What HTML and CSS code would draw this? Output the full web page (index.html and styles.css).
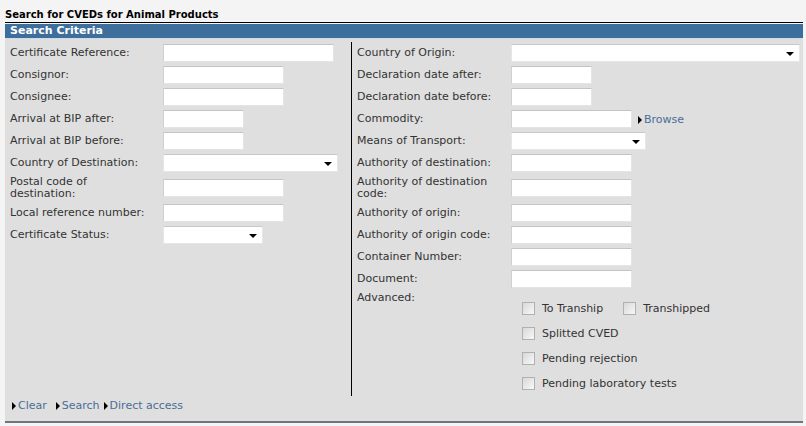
FILE: index.html
```html
<!DOCTYPE html>
<html lang="en">
<head>
    <meta charset="UTF-8">
    <title>Search for CVEDs for Animal Products</title>
    <link rel="stylesheet" href="styles.css">
</head>
<body>
    <div class="page">
        <h1 class="pageTitle">Search for CVEDs for Animal Products</h1>
        <div class="panel">
            <div class="panelHead">Search Criteria</div>
            <div class="panelBody">
                <div class="columns">
                    <div class="col colLeft">
                        <div class="field"><label>Certificate Reference:</label><input class="text w171" type="text"></div>
                        <div class="field"><label>Consignor:</label><input class="text w121" type="text"></div>
                        <div class="field"><label>Consignee:</label><input class="text w121" type="text"></div>
                        <div class="field"><label>Arrival at BIP after:</label><input class="text w81" type="text"></div>
                        <div class="field"><label>Arrival at BIP before:</label><input class="text w81" type="text"></div>
                        <div class="field"><label>Country of Destination:</label><div class="select w175"></div></div>
                        <div class="field tall"><label>Postal code of destination:</label><input class="text w121" type="text"></div>
                        <div class="field"><label>Local reference number:</label><input class="text w121" type="text"></div>
                        <div class="field"><label>Certificate Status:</label><div class="select w100"></div></div>
                    </div>
                    <div class="col colRight">
                        <div class="field"><label>Country of Origin:</label><div class="select w289"></div></div>
                        <div class="field"><label>Declaration date after:</label><input class="text w81" type="text"></div>
                        <div class="field"><label>Declaration date before:</label><input class="text w81" type="text"></div>
                        <div class="field"><label>Commodity:</label><input class="text w121" type="text"><a class="link browse" href="#">Browse</a></div>
                        <div class="field"><label>Means of Transport:</label><div class="select w135"></div></div>
                        <div class="field"><label>Authority of destination:</label><input class="text w121" type="text"></div>
                        <div class="field tall"><label>Authority of destination code:</label><input class="text w121" type="text"></div>
                        <div class="field"><label>Authority of origin:</label><input class="text w121" type="text"></div>
                        <div class="field"><label>Authority of origin code:</label><input class="text w121" type="text"></div>
                        <div class="field"><label>Container Number:</label><input class="text w121" type="text"></div>
                        <div class="field"><label>Document:</label><input class="text w121" type="text"></div>
                        <div class="field advanced">
                            <label>Advanced:</label>
                            <div class="checks">
                                <div class="checkRow">
                                    <span class="check"></span><span class="checkText">To Tranship</span>
                                    <span class="check second"></span><span class="checkText">Transhipped</span>
                                </div>
                                <div class="checkRow"><span class="check"></span><span class="checkText">Splitted CVED</span></div>
                                <div class="checkRow"><span class="check"></span><span class="checkText">Pending rejection</span></div>
                                <div class="checkRow"><span class="check"></span><span class="checkText">Pending laboratory tests</span></div>
                            </div>
                        </div>
                    </div>
                </div>
                <div class="actions">
                    <a class="link clear" href="#">Clear</a>
                    <a class="link" href="#">Search</a>
                    <a class="link" href="#">Direct access</a>
                </div>
            </div>
        </div>
    </div>
</body>
</html>
```

FILE: styles.css
```css
body {
    margin: 0;
    padding: 0;
    background-color: #f4f4f4;
    font-family: 'DejaVu Sans', Verdana, sans-serif;
    font-size: 11px;
    color: #333333;
}

.page {
    padding: 0 3px 0 5px;
}

.pageTitle {
    margin: 0;
    padding: 9px 0 1px 0;
    font-size: 10px;
    line-height: 12px;
    font-weight: bold;
    color: #000000;
    border-bottom: 1px solid #000000;
}

.panel {
    margin-top: 1px;
    border-bottom: 2px solid #6b7682;
}

.panelHead {
    background-color: #3e6e9b;
    color: #ffffff;
    font-weight: bold;
    line-height: 14px;
    padding-left: 5px;
    border-bottom: 1px solid #cfdce8;
}

.panelBody {
    background-color: #dfdfdf;
    padding-top: 3px;
}

.columns {
    display: flex;
}

.col {
    display: flex;
    flex-direction: column;
}

.colLeft {
    width: 341px;
    padding-left: 5px;
}

.colRight {
    flex: 1;
    padding-left: 5px;
    border-left: 1px solid #000000;
}

.field {
    display: grid;
    grid-template-columns: 153px auto;
    justify-content: start;
    align-items: center;
    height: 22px;
}

.colRight .field {
    grid-template-columns: 154px auto auto;
}

.field label {
    line-height: 12px;
    padding-right: 8px;
}

.field.tall {
    height: 28px;
}

.text {
    box-sizing: border-box;
    height: 18px;
    margin: 0;
    padding: 0 2px;
    background-color: #ffffff;
    border: 1px solid #e4e4e4;
    border-top-color: #c4c4c4;
    border-left-color: #d0d0d0;
    font-family: inherit;
    font-size: 11px;
}

.select {
    position: relative;
    box-sizing: border-box;
    height: 18px;
    background-color: #ffffff;
    border: 1px solid #e6e6e6;
    border-top-color: #c8c8c8;
}

.select::after {
    content: '';
    position: absolute;
    right: 5px;
    top: 7px;
    border-left: 4px solid transparent;
    border-right: 4px solid transparent;
    border-top: 4px solid #000000;
}

.w81 { width: 81px; }
.w100 { width: 100px; }
.w121 { width: 121px; }
.w135 { width: 135px; }
.w171 { width: 171px; }
.w175 { width: 175px; }
.w289 { width: 289px; }

.link {
    color: #4a6d98;
    text-decoration: none;
}

.link::before {
    content: '';
    display: inline-block;
    margin-right: 2px;
    border-top: 4px solid transparent;
    border-bottom: 4px solid transparent;
    border-left: 4px solid #000000;
    vertical-align: -1px;
}

.browse {
    margin-left: 6px;
}

.advanced {
    height: auto;
    align-items: start;
}

.advanced label {
    padding-top: 2px;
}

.checks {
    padding-top: 6px;
}

.checkRow {
    display: flex;
    align-items: center;
    height: 25px;
    padding-left: 11px;
}

.check {
    box-sizing: border-box;
    width: 13px;
    height: 13px;
    margin-right: 7px;
    border: 1px solid #b0b0b0;
    background: linear-gradient(135deg, #d8d8d8, #f8f8f8);
}

.check.second {
    margin-left: 20px;
}

.checkText {
    line-height: 12px;
}

.actions {
    display: flex;
    gap: 4px;
    padding: 4px 0 9px 7px;
    line-height: 12px;
}

.actions .clear {
    margin-right: 5px;
}
```
